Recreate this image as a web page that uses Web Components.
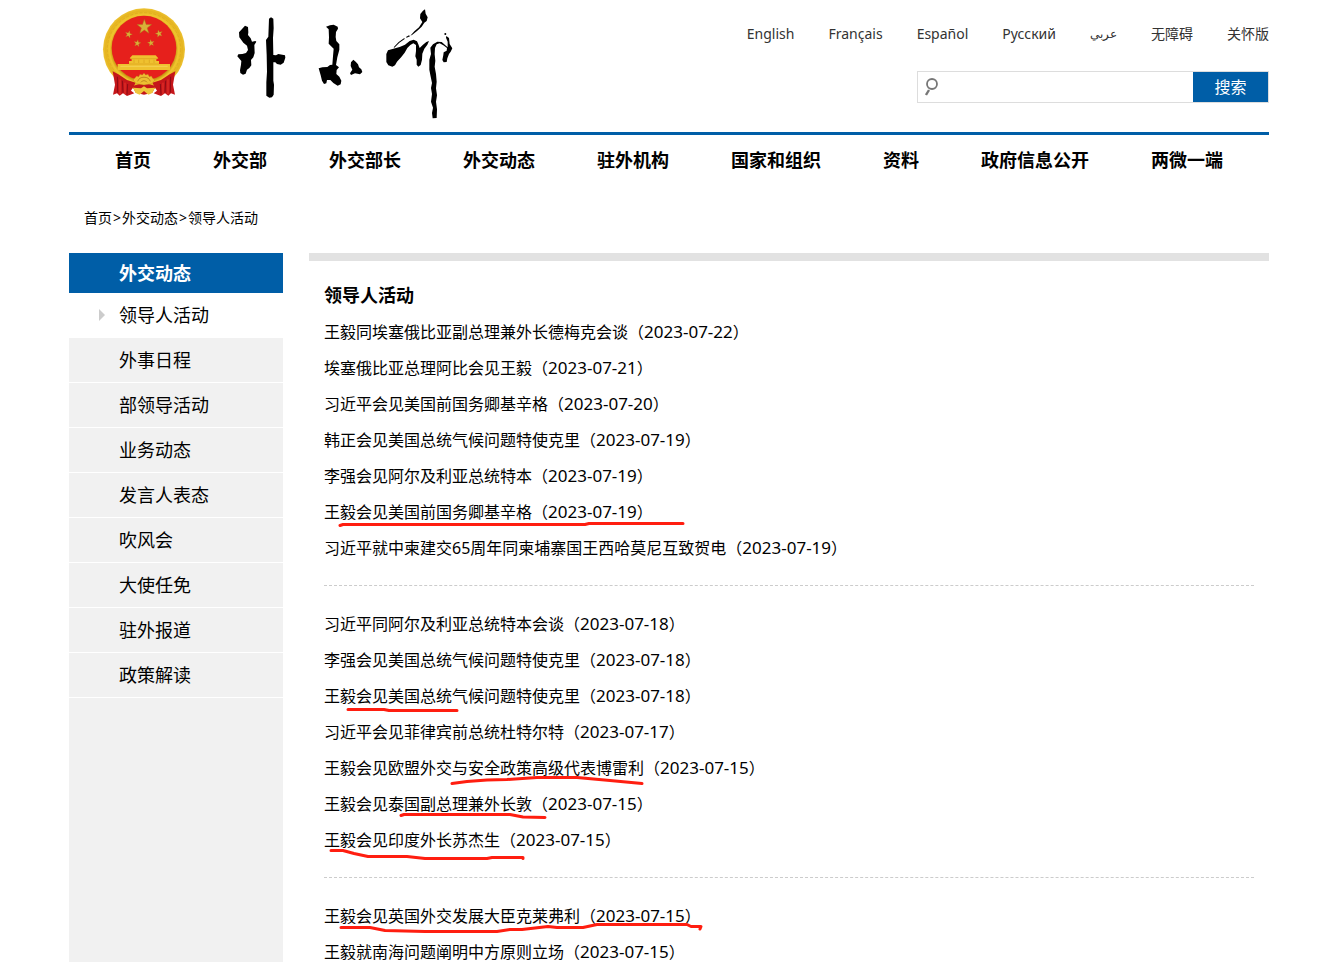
<!DOCTYPE html>
<html lang="zh-CN">
<head>
<meta charset="utf-8">
<title>领导人活动</title>
<style>
  body {
    margin: 0;
    background: #fff;
    color: #000;
    font-family: "Noto Sans", "Noto Sans CJK SC", sans-serif;
    font-size: 16px;
  }
</style>
</head>
<body>
<site-page>
  <site-header slot="header">
    <lang-nav slot="tools">
      <a href="#">English</a>
      <a href="#">Français</a>
      <a href="#">Español</a>
      <a href="#">Русский</a>
      <a href="#" lang="ar">عربي</a>
      <a href="#">无障碍</a>
      <a href="#">关怀版</a>
    </lang-nav>
    <search-box slot="tools"></search-box>
  </site-header>
  <main-nav slot="header">
    <a href="#">首页</a>
    <a href="#">外交部</a>
    <a href="#">外交部长</a>
    <a href="#">外交动态</a>
    <a href="#">驻外机构</a>
    <a href="#">国家和组织</a>
    <a href="#">资料</a>
    <a href="#">政府信息公开</a>
    <a href="#">两微一端</a>
  </main-nav>
  <bread-crumb slot="header"><a href="#">首页</a><span>&gt;</span><a href="#">外交动态</a><span>&gt;</span><a href="#">领导人活动</a></bread-crumb>

  <side-menu slot="side">
    <span slot="title">外交动态</span>
    <a href="#" class="current">领导人活动</a>
    <a href="#">外事日程</a>
    <a href="#">部领导活动</a>
    <a href="#">业务动态</a>
    <a href="#">发言人表态</a>
    <a href="#">吹风会</a>
    <a href="#">大使任免</a>
    <a href="#">驻外报道</a>
    <a href="#">政策解读</a>
  </side-menu>

  <news-list>
    <span slot="title">领导人活动</span>
    <news-group>
      <news-item date="2023-07-22">王毅同埃塞俄比亚副总理兼外长德梅克会谈</news-item>
      <news-item date="2023-07-21">埃塞俄比亚总理阿比会见王毅</news-item>
      <news-item date="2023-07-20">习近平会见美国前国务卿基辛格</news-item>
      <news-item date="2023-07-19">韩正会见美国总统气候问题特使克里</news-item>
      <news-item date="2023-07-19">李强会见阿尔及利亚总统特本</news-item>
      <news-item date="2023-07-19" stroke="M16 31.5L19 30.5H261L265 29.5H359">王毅会见美国前国务卿基辛格</news-item>
      <news-item date="2023-07-19">习近平就中柬建交65周年同柬埔寨国王西哈莫尼互致贺电</news-item>
    </news-group>
    <news-group>
      <news-item date="2023-07-18">习近平同阿尔及利亚总统特本会谈</news-item>
      <news-item date="2023-07-18">李强会见美国总统气候问题特使克里</news-item>
      <news-item date="2023-07-18" stroke="M24 31.5H60L65 32.5H133">王毅会见美国总统气候问题特使克里</news-item>
      <news-item date="2023-07-17">习近平会见菲律宾前总统杜特尔特</news-item>
      <news-item date="2023-07-15" stroke="M128 33.5L143 31.5L163 30L183 29.5L213 27.5H253L286 30.5L318 33.5">王毅会见欧盟外交与安全政策高级代表博雷利</news-item>
      <news-item date="2023-07-15" stroke="M77 29.5L80 28.5H186L199 31L221 31.5">王毅会见泰国副总理兼外长敦</news-item>
      <news-item date="2023-07-15" stroke="M7 28.5H19L30 31.5L44 34.5H83L101 36.5H163L168 35.5H199V36.5">王毅会见印度外长苏杰生</news-item>
    </news-group>
    <news-group>
      <news-item date="2023-07-15" stroke="M17 29.5H46L61 32.5L101 33.5H173L186 31.5L198 31.5L224 28.5L233 29.5H259L273 26.5H363L367 28.5H377L376 31">王毅会见英国外交发展大臣克莱弗利</news-item>
      <news-item date="2023-07-15">王毅就南海问题阐明中方原则立场</news-item>
    </news-group>
  </news-list>
</site-page>

<script>
// small helper, every element gets an open root with its own styles
class BaseElement extends HTMLElement {
  constructor() {
    super()
    this.attachShadow({ mode: "open" })
    this.shadowRoot.innerHTML = this.template()
  }
  template() {
    return "<slot></slot>"
  }
}

// page frame ------------------------------------------------------------
class SitePage extends BaseElement {
  template() {
    return `
    <style>
      :host { display: block; padding: 0 55px 0 69px; }
      .columns {
        display: grid;
        grid-template-columns: 214px 1fr;
        column-gap: 26px;
      }
    </style>
    <slot name="header"></slot>
    <div class="columns">
      <slot name="side"></slot>
      <slot></slot>
    </div>`
  }
}
customElements.define("site-page", SitePage)

// national emblem -------------------------------------------------------
class SiteEmblem extends BaseElement {
  template() {
    const star = "0,-10 2.4,-3.2 9.5,-3.1 3.8,1.2 5.9,8.1 0,4 -5.9,8.1 -3.8,1.2 -9.5,-3.1 -2.4,-3.2"
    return `
    <style>
      :host { display: block; }
      svg { display: block; }
    </style>
    <svg width="84" height="90" viewBox="21 22 252 270" role="img" aria-label="国徽">
      <defs>
        <radialGradient id="ring" cx="147" cy="146" r="124" gradientUnits="userSpaceOnUse">
          <stop offset="0.76" stop-color="#c79212"/>
          <stop offset="0.83" stop-color="#f0c52d"/>
          <stop offset="0.93" stop-color="#e5b420"/>
          <stop offset="1" stop-color="#efc638"/>
        </radialGradient>
      </defs>
      <circle cx="147" cy="146" r="123" fill="url(#ring)"/>
      <circle cx="147" cy="146" r="110" fill="none" stroke="#e0ae20" stroke-width="3" stroke-dasharray="9 5"/>
      <circle cx="147" cy="142" r="97" fill="#e6201c"/>
      <g fill="#d9b038" stroke="#a9741b" stroke-width="0.6">
        <polygon points="${star}" transform="translate(148 79) scale(2.3)"/>
        <polygon points="${star}" transform="translate(101 101) scale(1.15) rotate(15)"/>
        <polygon points="${star}" transform="translate(192 99) scale(1.15) rotate(-15)"/>
        <polygon points="${star}" transform="translate(127 128) scale(1.1) rotate(10)"/>
        <polygon points="${star}" transform="translate(168 127) scale(1.1) rotate(-10)"/>
      </g>
      <path fill="#efc12f" d="M112 164H182L190 173L184 176V181H192V190H225V208H68V190H102V181H110V176L104 173Z"/>
      <path stroke="#d9a01c" stroke-width="2" fill="none" d="M108 174H187M102 190H192M117 177V187M131 177V187M147 177V187M163 177V187M177 177V187"/>
      <path fill="#f4cf4b" d="M76 195H218V199H76Z"/>
      <path fill="#c5161a" d="M53 212L70 221L96 238L122 246L108 270L118 278L96 286L84 278L74 285L66 278L54 282L60 252Z"/>
      <path fill="#c5161a" d="M241 212L224 221L198 238L172 246L186 270L176 278L198 286L210 278L220 285L228 278L240 282L234 252Z"/>
      <path fill="none" stroke="#8d0c14" stroke-width="3" d="M67 228L68 276M82 240L84 276M98 250L96 282M227 228L226 276M212 240L210 276M196 250L198 282"/>
      <path fill="none" stroke="#e6342a" stroke-width="3" d="M75 236L75 280M90 246L90 280M219 236L219 280M204 246L204 280"/>
      <path fill="#c5161a" d="M112 256L147 246L182 256L172 276L147 282L122 276Z"/>
      <path fill="#edbf32" stroke="#b67d12" stroke-width="1" d="M119 233L125 226L131 228L135 221L142 223L147 217L152 223L159 221L163 228L169 226L173 233L180 238L170 249L147 253L124 249L114 238Z"/>
      <path fill="none" stroke="#a96d12" stroke-width="2" d="M128 242A20 18 0 0 1 166 242M138 245A10 9 0 0 1 156 245"/>
      <path fill="#efc63c" d="M114 261L138 263L147 257L156 263L180 261L172 277L160 282L147 271L134 282L122 277Z"/>
    </svg>`
  }
}
customElements.define("site-emblem", SiteEmblem)

// brush logo beside the emblem ------------------------------------------
class BrushLogo extends BaseElement {
  template() {
    return `
    <style>
      :host { display: block; }
      svg { display: block; }
    </style>
    <svg width="217" height="111" viewBox="36 10 651 333" role="img" aria-label="外交部">
      <path d="M60 63L69 67L70 83L69 91L77 101L81 111L91 109L94 111L88 121L89 145L85 158L78 166L79 182L73 190L66 195L62 207L54 210L46 205L45 197L48 180L49 169L37 155L40 149L52 148L63 145L69 136L66 123L55 114L43 98L42 83Z"/>
      <path d="M132 42L138 38L145 42L146 71L144 100L145 151L153 152L160 148L180 152L181 159L176 174L167 180L156 178L151 173L145 173L145 228L147 240L146 270L141 278L133 279L124 273L124 233L126 201L125 150L123 106L130 96Z"/>
      <path d="M303 66L315 62L326 60L338 66L339 72L333 82L332 97L334 109L343 119L343 135L337 158L333 181L342 188L335 196L334 208L343 216L349 228L347 239L338 243L325 235L316 226L306 226L304 236L297 238L291 228L287 212L281 191L292 188L307 187L315 181L322 180L324 155L326 132L311 117L312 98L311 74Z"/>
      <path d="M385 165L392 171L399 179L402 188L409 194L412 202L405 209L390 206L378 211L375 206L382 195L377 184L378 173Z"/>
      <path d="M600 14L602 27L608 38L605 49L598 54L590 66L577 78L562 90L556 93L568 80L582 68L592 52L585 41L586 28L594 18Z"/>
      <path d="M552 92L555 95L545 99L543 97ZM538 100L539 103L523 114L508 129L506 128L521 112Z"/>
      <path d="M484 148L489 137L505 132L524 127L540 120L554 109L566 105L576 110L580 119L584 130L594 120L604 112L612 109L607 120L598 132L592 147L591 165L587 181L580 186L575 180L575 165L571 155L573 139L573 121L565 116L556 121L547 130L539 144L529 157L516 171L510 182L502 186L490 182L484 172Z"/>
      <path d="M616 129L624 119L637 111L650 112L661 122L668 128L668 111L663 99L664 94L672 100L674 118L682 131L677 141L672 148L667 161L665 172L656 173L652 166L655 151L656 143L665 138L666 130L655 122L644 116L635 119L630 130L629 149L631 168L629 186L633 208L635 231L633 251L636 272L633 291L636 314L635 340L623 341L621 325L624 309L618 291L621 268L618 250L621 235L616 211L613 195L613 165L618 148Z"/>
      <circle cx="661" cy="88" r="3"/>
    </svg>`
  }
}
customElements.define("brush-logo", BrushLogo)

// header ----------------------------------------------------------------
class SiteHeader extends BaseElement {
  template() {
    return `
    <style>
      :host {
        display: flex;
        justify-content: space-between;
        padding: 8px 0 13px 33px;
        border-bottom: 3px solid #005ea7;
      }
      .brand { display: flex; gap: 51px; }
      .tools {
        display: flex;
        flex-direction: column;
        align-items: flex-end;
        gap: 27px;
        padding-top: 16px;
      }
    </style>
    <div class="brand">
      <site-emblem></site-emblem>
      <brush-logo></brush-logo>
    </div>
    <div class="tools"><slot name="tools"></slot></div>`
  }
}
customElements.define("site-header", SiteHeader)

class LangNav extends BaseElement {
  template() {
    return `
    <style>
      :host { display: block; }
      nav { display: flex; gap: 34px; }
      ::slotted(a) {
        color: #333;
        font-size: 14px;
        line-height: 20px;
        text-decoration: none;
      }
      ::slotted(a[lang="ar"]) { font-size: 12px; }
    </style>
    <nav aria-label="语言"><slot></slot></nav>`
  }
}
customElements.define("lang-nav", LangNav)

class SearchBox extends BaseElement {
  template() {
    return `
    <style>
      :host { display: block; }
      form {
        display: flex;
        align-items: center;
        width: 350px;
        height: 30px;
        border: 1px solid #ddd;
      }
      label { display: flex; padding: 0 7px; }
      input {
        flex: 1;
        min-width: 0;
        height: 28px;
        padding: 0;
        border: 0;
        outline: 0;
        font: inherit;
        background: none;
      }
      button {
        width: 75px;
        height: 30px;
        padding: 0;
        border: 0;
        background: #005ea7;
        color: #fff;
        font: inherit;
        line-height: 30px;
      }
    </style>
    <form>
      <label for="q" aria-label="搜索">
        <svg width="14" height="18" viewBox="0 0 14 18" fill="none" stroke="#777">
          <circle cx="7" cy="6" r="5" stroke-width="1.8"/>
          <path d="M4 12L1 17" stroke-width="2.4"/>
        </svg>
      </label>
      <input id="q" type="text">
      <button type="button">搜索</button>
    </form>`
  }
}
customElements.define("search-box", SearchBox)

class MainNav extends BaseElement {
  template() {
    return `
    <style>
      :host { display: block; }
      nav {
        display: flex;
        justify-content: space-between;
        padding: 0 46px;
      }
      ::slotted(a) {
        color: #000;
        font-size: 18px;
        font-weight: bold;
        line-height: 50px;
        text-decoration: none;
      }
    </style>
    <nav><slot></slot></nav>`
  }
}
customElements.define("main-nav", MainNav)

class BreadCrumb extends BaseElement {
  template() {
    return `
    <style>
      :host {
        display: flex;
        padding: 23px 15px 25px;
        font-size: 14px;
        line-height: 20px;
      }
      ::slotted(a) { color: #000; text-decoration: none; }
      ::slotted(span) { margin: 0 1px; }
    </style>
    <slot></slot>`
  }
}
customElements.define("bread-crumb", BreadCrumb)

// left column -----------------------------------------------------------
class SideMenu extends BaseElement {
  template() {
    return `
    <style>
      :host { display: block; background: #f1f1f1; font-size: 18px; }
      h2 {
        margin: 0;
        padding-left: 50px;
        background: #005ea7;
        color: #fff;
        font-size: 18px;
        line-height: 40px;
      }
      ::slotted(a) {
        display: flex;
        align-items: center;
        padding-left: 50px;
        border-bottom: 1px solid #fff;
        color: #000;
        line-height: 44px;
        text-decoration: none;
      }
      ::slotted(a.current) { padding-left: 30px; background: #fff; }
      ::slotted(a.current)::before {
        content: "";
        margin-right: 14px;
        border: 6px solid transparent;
        border-left-color: #ccc;
        border-right: 0;
      }
    </style>
    <h2><slot name="title"></slot></h2>
    <nav><slot></slot></nav>`
  }
}
customElements.define("side-menu", SideMenu)

// news ------------------------------------------------------------------
class NewsList extends BaseElement {
  template() {
    return `
    <style>
      :host {
        display: block;
        padding: 15px 15px 0;
        border-top: 8px solid #e2e2e2;
      }
      h1 { margin: 0; font-size: 18px; line-height: 38px; }
    </style>
    <h1><slot name="title"></slot></h1>
    <slot></slot>`
  }
}
customElements.define("news-list", NewsList)

class NewsGroup extends BaseElement {
  template() {
    return `
    <style>
      :host {
        display: block;
        margin-bottom: 20px;
        padding-bottom: 19px;
        border-bottom: 1px dashed #ccc;
      }
    </style>
    <div role="list"><slot></slot></div>`
  }
}
customElements.define("news-group", NewsGroup)

class NewsItem extends BaseElement {
  template() {
    const date = this.getAttribute("date")
    const stroke = this.getAttribute("stroke")
    return `
    <style>
      :host { display: block; position: relative; height: 36px; line-height: 36px; }
      a { color: #000; text-decoration: none; }
      time { font-size: 17px; }
      /* pen line lies over the text */
      svg {
        position: absolute;
        inset: 0;
        width: 100%;
        height: 100%;
        overflow: visible;
        pointer-events: none;
      }
      path {
        fill: none;
        stroke: #ff1e10;
        stroke-width: 3;
        stroke-linecap: round;
        stroke-linejoin: round;
      }
    </style>
    <a href="#"><slot></slot>（<time>${date}</time>）</a>
    ${stroke ? `<svg><path d="${stroke}"/></svg>` : ""}`
  }
}
customElements.define("news-item", NewsItem)
</script>
</body>
</html>
